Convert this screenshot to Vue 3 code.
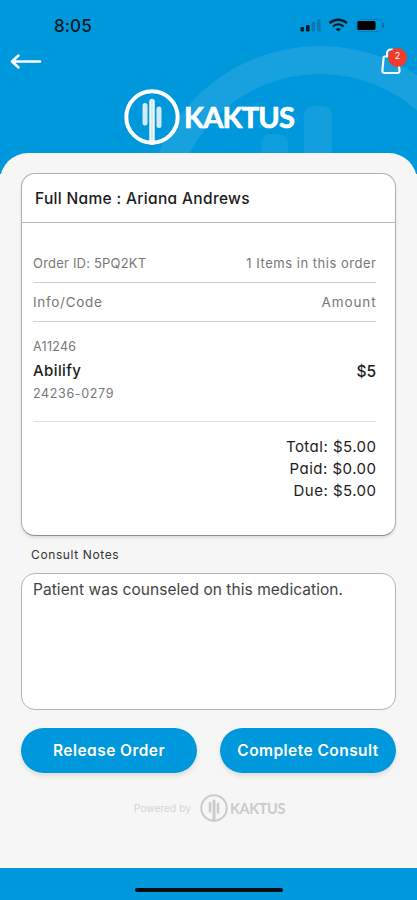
<script setup>
const orderMeta = [
  { left: 'Order ID: 5PQ2KT', right: '1 Items in this order', kind: 'order' },
  { left: 'Info/Code', right: 'Amount', kind: 'info' },
]
const totals = ['Total: $5.00', 'Paid: $0.00', 'Due: $5.00']
</script>

<template>
  <div class="screen">
    <header class="top">
      <svg class="watermark" width="417" height="174" viewBox="0 0 417 174" fill="none">
        <circle cx="320" cy="221" r="161" stroke="#fff" stroke-width="28" />
        <rect x="261" y="134" width="27" height="60" rx="9" fill="#fff" opacity=".6" />
        <rect x="304" y="106" width="28" height="90" rx="9" fill="#fff" opacity=".8" />
      </svg>
      <div class="status">
        <span class="time">8:05</span>
        <svg class="signals" width="88" height="18" viewBox="0 0 88 18" fill="none">
          <rect x="0.5" y="11" width="3.6" height="4.5" rx="1" fill="#071820" />
          <rect x="6" y="9" width="3.6" height="6.5" rx="1" fill="#071820" />
          <rect x="11.5" y="6" width="3.6" height="9.5" rx="1" fill="#0879b4" />
          <rect x="17" y="3" width="3.6" height="12.5" rx="1" fill="#0879b4" />
          <path d="M29.500 7.200c5-4.600 12.500-4.600 17.500 0M33 10.700c3.100-3 7.400-3 10.500 0" stroke="#071820" stroke-width="2.300" />
          <path d="M35.600 13.100c1.500-1.300 3.900-1.300 5.400 0L38.300 15.500z" fill="#071820" />
          <rect x="56.500" y="3.500" width="25" height="12" rx="3" stroke="#087eba" />
          <rect x="57.500" y="5" width="18" height="9" rx="1.500" fill="#000" />
          <path d="M82.500 6.500c2.400 1 2.400 5 0 6z" fill="#086b9e" />
        </svg>
      </div>
      <div class="nav">
        <svg width="34" height="20" viewBox="0 0 34 20" fill="none" stroke="#fff" stroke-width="2.500" stroke-linecap="round" stroke-linejoin="round">
          <path d="M31 10.500H3M9.500 4.500L3 10.500l6.500 6" />
        </svg>
        <div class="bag">
          <svg width="24" height="28" viewBox="0 0 24 28" fill="none" stroke="#f4fbff" stroke-width="2.200" stroke-linejoin="round" stroke-linecap="round">
            <path d="M5.500 8.500H18.500L20.500 22.500Q20.700 25 18.300 25H5.500Q3.200 25 3.400 22.500L4.500 10.500Q4.500 8.500 5.500 8.500zM8 8.500V6Q8 1.500 12 1.500T16.500 6V8.500" />
          </svg>
          <span class="badge">2</span>
        </div>
      </div>
      <div class="brand">
        <svg width="56" height="56" viewBox="0 0 56 56" fill="none">
          <circle cx="28" cy="28" r="25.700" stroke="#fff" stroke-width="4" />
          <rect x="18.500" y="14" width="5" height="22.500" rx="2.500" fill="#fff" opacity=".82" />
          <path d="M28 12.500V54" stroke="#fff" stroke-width="5.500" stroke-linecap="round" opacity=".82" />
          <rect x="32.500" y="17.500" width="5" height="21.500" rx="2.500" fill="#fff" opacity=".82" />
          <path d="M26.300 12V53M29.700 12V53" stroke="#fff" />
        </svg>
        <span class="brand-name">KAKTUS</span>
      </div>
    </header>

    <main class="sheet">
      <section class="card">
        <h1 class="name"><span>Full Name : Ariana Andrews</span></h1>
        <div class="body">
          <div v-for="row in orderMeta" :key="row.kind" class="row" :class="row.kind">
            <span class="left">{{ row.left }}</span>
            <span class="right">{{ row.right }}</span>
          </div>
          <div class="item">
            <div class="item-info">
              <span class="code">A11246</span>
              <span class="drug">Abilify</span>
              <span class="ndc">24236-0279</span>
            </div>
            <span class="price">$5</span>
          </div>
          <div class="totals">
            <span v-for="line in totals" :key="line">{{ line }}</span>
          </div>
        </div>
      </section>
      <div class="label"><span>Consult Notes</span></div>
      <div class="notes"><span>Patient was counseled on this medication.</span></div>
      <div class="actions">
        <button class="release"><span>Release Order</span></button>
        <button class="complete"><span>Complete Consult</span></button>
      </div>
      <div class="powered">
        <span class="by">Powered by</span>
        <svg width="28" height="28" viewBox="0 0 56 56" fill="none" stroke="#cbcbcb" stroke-linecap="round">
          <circle cx="28" cy="28" r="25.500" stroke-width="4" />
          <path d="M28 14V53" stroke-width="6" />
          <path d="M20 18V35M36 20V37" stroke-width="5" />
        </svg>
        <span class="powered-name">KAKTUS</span>
      </div>
    </main>
    <footer class="bottom"><div class="home"></div></footer>
  </div>
</template>

<style>
body { margin: 0; }
</style>

<style scoped>
* { box-sizing: border-box; }
.screen {
  width: 417px;
  height: 900px;
  display: flex;
  flex-direction: column;
  overflow: hidden;
  background: #f6f6f6;
  font-family: Inter, "Open Sans", sans-serif;
  font-feature-settings: "cv11";
  color: #1c1c1c;
  white-space: nowrap;
}
.top {
  position: relative;
  height: 174px;
  flex: none;
  background: #0098dc;
}
.watermark { position: absolute; inset: 0; opacity: .09; }
.status {
  height: 48px;
  padding: 16px 29px 0 54px;
  display: flex;
  justify-content: space-between;
}
.time { font-size: 17px; line-height: 20px; font-weight: 500; letter-spacing: .1px; color: #071820; }
.nav {
  height: 40px;
  padding: 3px 10px 0 9px;
  display: flex;
  justify-content: space-between;
}
.bag { position: relative; width: 27px; height: 28px; margin-top: -3px; }
.bag > svg { display: block; margin-left: -1px; }
.badge {
  position: absolute;
  top: 0;
  right: 0;
  width: 19px;
  height: 19px;
  border-radius: 50%;
  background: #f03b2d;
  color: #fff;
  font-size: 9px;
  line-height: 15px;
  text-align: center;
}
.brand { display: flex; align-items: center; padding: 1px 0 0 124px; }
.brand-name {
  font-family: Lato, sans-serif;
  font-size: 29px;
  font-weight: 700;
  line-height: 56px;
  height: 56px;
  letter-spacing: -.75px;
  font-kerning: none;
  color: #fff;
  -webkit-text-stroke: .7px #fff;
  margin-left: 4px;
}
.sheet {
  position: relative;
  height: 715px;
  flex: none;
  margin-top: -21px;
  padding: 20px 21px 0;
  border-radius: 28px 28px 0 0;
  background: #f6f6f6;
}
.card {
  height: 363px;
  border: 1px solid #b0b0b0;
  border-bottom-color: #8f8f8f;
  border-radius: 14px;
  background: #fff;
  box-shadow: 0 2px 3px rgba(0, 0, 0, .1);
}
.name {
  margin: 0;
  height: 49px;
  padding-left: 13px;
  border-bottom: 1px solid #b9b9b9;
  font-size: 15.5px;
  font-weight: 450;
  line-height: 50px;
  letter-spacing: .33px;
}
.body { padding: 21px 19px 0 11px; }
.row {
  display: flex;
  justify-content: space-between;
  border-bottom: 1px solid #d0d0d0;
  color: #777;
  font-size: 13px;
  font-weight: 400;
  line-height: 38px;
  height: 39px;
}
.row.order { line-height: 39px; }
.order .left { letter-spacing: .2px; }
.order .right { letter-spacing: .52px; margin-right: -.5px; }
.info { font-size: 13.5px; }
.info .left { letter-spacing: .7px; }
.info .right { letter-spacing: .9px; margin-right: -.5px; }
.item {
  height: 100px;
  padding-top: 13px;
  border-bottom: 1px solid #ddd;
  display: flex;
  justify-content: space-between;
}
.item-info { display: flex; flex-direction: column; line-height: 23.5px; font-size: 12.5px; color: #777; }
.code { letter-spacing: .3px; }
.drug { font-size: 15px; font-weight: 500; letter-spacing: .4px; color: #1c1c1c; }
.ndc { letter-spacing: .65px; }
.price { font-size: 15.5px; font-weight: 500; line-height: 73px; }
.totals {
  padding-top: 14px;
  display: flex;
  flex-direction: column;
  align-items: flex-end;
  margin-right: -.5px;
  font-size: 15px;
  line-height: 22px;
  letter-spacing: .48px;
}
.label { height: 37px; padding-left: 10px; font-size: 12px; line-height: 38px; letter-spacing: .62px; color: #333; }
.notes {
  height: 137px;
  padding: 5px 11px;
  border: 1px solid #b4b4b4;
  border-radius: 14px;
  background: #fff;
  font-size: 15.5px;
  line-height: 22px;
  letter-spacing: .05px;
  color: #444;
  font-feature-settings: normal;
}
.actions { display: flex; justify-content: space-between; margin-top: 18px; }
button {
  width: 176px;
  height: 45px;
  padding: 0;
  border: 0;
  border-radius: 23px;
  background: #0098dc;
  color: #fff;
  font: 600 15.5px Inter, sans-serif;
  font-feature-settings: "cv11";
  letter-spacing: .45px;
  box-shadow: 0 3px 5px rgba(0, 0, 0, .1);
}
.powered { display: flex; align-items: center; margin: 21px 0 0 113px; height: 28px; }
.by { width: 66px; font-size: 10px; letter-spacing: .1px; color: #d4d4d4; }
.powered-name { font: 700 14.5px Lato, sans-serif; font-kerning: none; letter-spacing: -.4px; color: #cbcbcb; margin-left: 2px; }
.bottom { flex: none; height: 32px; background: #0098dc; display: flex; justify-content: center; padding-top: 20px; }
.home { width: 148px; height: 4px; border-radius: 2px; background: #080d12; }
</style>
